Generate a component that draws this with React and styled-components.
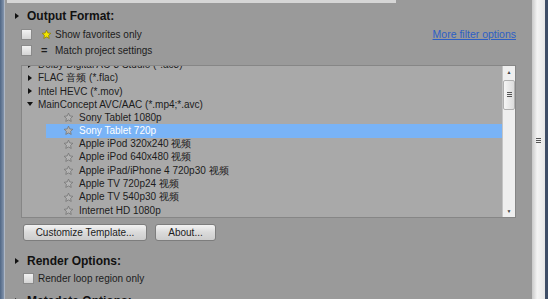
import React from 'react'
import styled, { createGlobalStyle } from 'styled-components'

const Global = createGlobalStyle`
  html, body { margin: 0; padding: 0; }
  body {
    width: 548px;
    height: 299px;
    overflow: hidden;
    background: #9a9a9a;
    font-family: "Liberation Sans", Arial, sans-serif;
  }
`

const presets = [
  { label: 'Dolby Digital AC-3 Studio (*.ac3)', level: 0 },
  { label: 'FLAC 音频 (*.flac)', level: 0 },
  { label: 'Intel HEVC (*.mov)', level: 0 },
  { label: 'MainConcept AVC/AAC (*.mp4;*.avc)', level: 0, open: true },
  { label: 'Sony Tablet 1080p', level: 1 },
  { label: 'Sony Tablet 720p', level: 1, selected: true },
  { label: 'Apple iPod 320x240 视频', level: 1 },
  { label: 'Apple iPod 640x480 视频', level: 1 },
  { label: 'Apple iPad/iPhone 4 720p30 视频', level: 1 },
  { label: 'Apple TV 720p24 视频', level: 1 },
  { label: 'Apple TV 540p30 视频', level: 1 },
  { label: 'Internet HD 1080p', level: 1 },
]

function StarIcon({ filled }) {
  return (
    <svg width="11" height="11" viewBox="0 0 24 24">
      <path
        d="M12 2.5l2.9 6.1 6.6.8-4.9 4.6 1.3 6.6L12 17.3l-5.9 3.3 1.3-6.6-4.9-4.6 6.6-.8z"
        fill={filled ? '#f2e600' : '#b4b4b4'}
        stroke={filled ? '#8a7a00' : '#707070'}
        strokeWidth="1.6"
        strokeLinejoin="round"
      />
    </svg>
  )
}

function App() {
  return (
    <>
      <Global />
      <Window>
        <LeftFrame />
        <Main>
          <TopStrip />
          <SectionHead $gap={4}>
            <Arrow />
            Output Format:
          </SectionHead>
          <FilterArea>
            <div>
              <CheckRow>
                <Box />
                <Glyph><StarIcon filled /></Glyph>
                Show favorites only
              </CheckRow>
              <CheckRow>
                <Box />
                <Glyph>=</Glyph>
                Match project settings
              </CheckRow>
            </div>
            <Link>More filter options</Link>
          </FilterArea>

          <ListBox>
            <ListView>
              <ListInner>
                {presets.map((p) => (
                  <Row key={p.label} $selected={p.selected} $level={p.level}>
                    {p.level === 0 ? (
                      <Expander $open={p.open} />
                    ) : (
                      <StarSlot><StarIcon /></StarSlot>
                    )}
                    <RowText $selected={p.selected}>{p.label}</RowText>
                  </Row>
                ))}
              </ListInner>
            </ListView>
            <VScroll>
              <ScrollArrow>▲</ScrollArrow>
              <Thumb><Grip /></Thumb>
              <ScrollTrack />
              <ScrollArrow>▼</ScrollArrow>
            </VScroll>
          </ListBox>

          <Buttons>
            <Button $w={122}>Customize Template...</Button>
            <Button $w={59}>About...</Button>
          </Buttons>

          <SectionHead $gap={10.5}>
            <Arrow />
            Render Options:
          </SectionHead>
          <CheckRow $indent={2} $top={0.5}>
            <Box $gap={4} />
            Render loop region only
          </CheckRow>
          <SectionHead $gap={6}>
            <Arrow />
            Metadata Options:
          </SectionHead>
        </Main>
        <OuterScroll>
          <Grip />
        </OuterScroll>
        <RightFrame />
      </Window>
    </>
  )
}

const Window = styled.div`
  display: flex;
  width: 548px;
  height: 299px;
  overflow: hidden;
`
const LeftFrame = styled.div`
  width: 5px;
  flex-shrink: 0;
  background: linear-gradient(to right, #4f6684, #7d8fa8 70%, #c8ccd2);
`
const Main = styled.div`
  flex: 1;
  display: flex;
  flex-direction: column;
  padding: 0 16px 0 16px;
  color: #1c1c1c;
  font-size: 10px;
  overflow: hidden;
`
const TopStrip = styled.div`
  height: 3px;
  flex-shrink: 0;
  margin: 0 120px 0 -14px;
  background: #d6d6d6;
`
const SectionHead = styled.div`
  display: flex;
  align-items: center;
  flex-shrink: 0;
  height: 18px;
  margin-top: ${(p) => p.$gap ?? 5}px;
  margin-left: -6px;
  font-size: 12px;
  font-weight: bold;
  color: #111;
  white-space: nowrap;
`
const Arrow = styled.span`
  width: 0;
  height: 0;
  border-top: 3px solid transparent;
  border-bottom: 3px solid transparent;
  border-left: 4px solid #111;
  margin-right: 8px;
`
const FilterArea = styled.div`
  display: flex;
  justify-content: space-between;
  align-items: flex-start;
  margin-top: 1px;
`
const CheckRow = styled.div`
  display: flex;
  align-items: center;
  flex-shrink: 0;
  height: 16px;
  margin-left: ${(p) => p.$indent ?? 0}px;
  margin-top: ${(p) => p.$top ?? 0}px;
  white-space: nowrap;
`
const Box = styled.span`
  width: 9px;
  height: 9px;
  margin-right: ${(p) => p.$gap ?? 6}px;
  border: 1px solid #8a8a8a;
  background: linear-gradient(#f2f2f2, #d4d4d4);
`
const Glyph = styled.span`
  width: 14px;
  margin-left: 3px;
  display: flex;
  align-items: center;
  font-weight: bold;
  font-size: 11px;
`
const Link = styled.span`
  color: #2d5fc4;
  text-decoration: underline;
  font-size: 10.5px;
  margin-top: 2px;
`
const ListBox = styled.div`
  display: flex;
  flex-shrink: 0;
  height: 151px;
  margin-top: 7px;
  border: 1px solid #868686;
  background: #a9a9a9;
`
const ListView = styled.div`
  flex: 1;
  overflow: hidden;
`
const ListInner = styled.div`
  margin-top: -8px;
`
const Row = styled.div`
  display: flex;
  align-items: center;
  height: 13.25px;
  margin-left: ${(p) => (p.$selected ? 24 : 0)}px;
  padding-left: ${(p) => (p.$level ? (p.$selected ? 17 : 41) : 5)}px;
  background: ${(p) => (p.$selected ? '#79b3f6' : 'transparent')};
`
const Expander = styled.span`
  width: 0;
  height: 0;
  margin-right: 5px;
  ${(p) =>
    p.$open
      ? `border-left: 3px solid transparent; border-right: 3px solid transparent; border-top: 4px solid #111;`
      : `border-top: 3px solid transparent; border-bottom: 3px solid transparent; border-left: 4px solid #111; margin-left: 1px; margin-right: 6px;`}
`
const StarSlot = styled.span`
  display: flex;
  width: 16px;
`
const RowText = styled.span`
  color: ${(p) => (p.$selected ? '#ffffff' : '#1c1c1c')};
  white-space: nowrap;
`
const VScroll = styled.div`
  width: 12px;
  display: flex;
  flex-direction: column;
  background: #efefef;
  border-left: 1px solid #c4c4c4;
`
const ScrollArrow = styled.div`
  height: 12px;
  font-size: 5px;
  color: #444;
  display: flex;
  align-items: center;
  justify-content: center;
`
const Thumb = styled.div`
  height: 28px;
  margin: 2px 0 0;
  border: 1px solid #b0b0b0;
  border-radius: 2px;
  background: linear-gradient(to right, #f6f6f6, #dcdcdc);
  display: flex;
  align-items: center;
  justify-content: center;
`
const Grip = styled.span`
  width: 5px;
  height: 6px;
  background: repeating-linear-gradient(#555 0 1px, transparent 1px 2px);
`
const ScrollTrack = styled.div`
  flex: 1;
`
const Buttons = styled.div`
  display: flex;
  flex-shrink: 0;
  gap: 8px;
  margin-top: 6px;
  margin-left: 2px;
`
const Button = styled.div`
  width: ${(p) => p.$w}px;
  height: 15px;
  display: flex;
  align-items: center;
  justify-content: center;
  border: 1px solid #7d7d7d;
  border-radius: 3px;
  background: linear-gradient(#f3f3f3, #dadada 50%, #cdcdcd);
  font-size: 10px;
  color: #1c1c1c;
`
const OuterScroll = styled.div`
  width: 13px;
  flex-shrink: 0;
  background: linear-gradient(to right, #c9c9c9, #f4f4f4 40%, #e6e6e6);
  display: flex;
  align-items: center;
  justify-content: center;
  padding-bottom: 18px;
  box-sizing: border-box;
`
const RightFrame = styled.div`
  width: 3px;
  flex-shrink: 0;
  background: #3e4d66;
`

export default App
